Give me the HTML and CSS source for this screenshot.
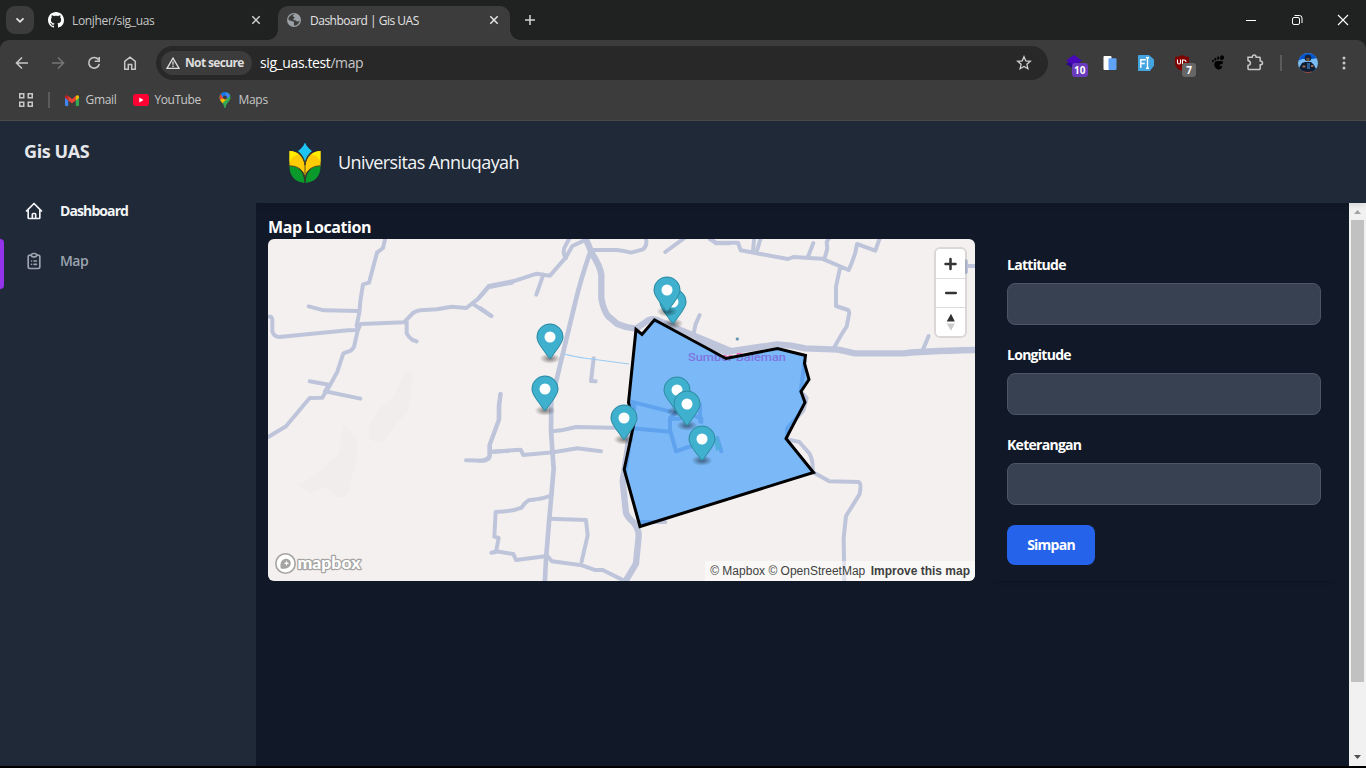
FILE: index.html
```html
<!DOCTYPE html>
<html lang="id">
<head>
<meta charset="utf-8">
<title>Dashboard | Gis UAS</title>
<link rel="stylesheet" href="styles.css">
</head>
<body>
<div class="window">
  <div class="tabstrip">
    <div class="tab-search"><svg width="28" height="28" viewBox="0 0 28 28"><path d="M10.500 12.300l3.500 3.500 3.500-3.500" fill="none" stroke="#e3e3e3" stroke-width="1.800"/></svg></div>
    <div class="tab">
      <svg class="favicon" width="16" height="16" viewBox="0 0 16 16"><path fill="#fff" d="M8 0C3.58 0 0 3.58 0 8c0 3.54 2.29 6.53 5.47 7.59.4.07.55-.17.55-.38 0-.19-.01-.82-.01-1.49-2.01.37-2.53-.49-2.69-.94-.09-.23-.48-.94-.82-1.13-.28-.15-.68-.52-.01-.53.63-.01 1.08.58 1.23.82.72 1.21 1.87.87 2.33.66.07-.52.28-.87.51-1.07-1.78-.2-3.64-.89-3.64-3.95 0-.87.31-1.59.82-2.15-.08-.2-.36-1.02.08-2.12 0 0 .67-.21 2.2.82.64-.18 1.32-.27 2-.27s1.36.09 2 .27c1.53-1.04 2.2-.82 2.2-.82.44 1.1.16 1.92.08 2.12.51.56.82 1.27.82 2.15 0 3.07-1.87 3.75-3.65 3.95.29.25.54.73.54 1.48 0 1.07-.01 1.93-.01 2.2 0 .21.15.46.55.38A8.01 8.01 0 0 0 16 8c0-4.42-3.58-8-8-8z"/></svg>
      <span class="tab-title">Lonjher/sig_uas</span>
      <svg class="close" width="10" height="10" viewBox="0 0 10 10"><path d="M1.300 1.300l7.400 7.400M8.700 1.300L1.300 8.700" stroke="#d0d0d0" stroke-width="1.500"/></svg>
    </div>
    <div class="tab active">
      <svg class="favicon" width="14" height="14" viewBox="0 0 14 14"><circle cx="7" cy="7" r="7" fill="#9aa0a6"/><path d="M7.800 1.200C7 2.200 5.800 1.600 5.800 3c0 1.200 1.700.400 1.800 1.500.100 1-1.200.800-1.300 2 0 1 .900.700 2.100.800 1 .100.800 1.200 2 1.200s1.200-.700 2.300-.800c-.400 2.500-2.500 4.700-5.300 5l-.600-1.400c-.200-1 .800-1.500 0-2.400C5.700 7.800 3.500 8.500 1.200 6.200 1.500 3.600 4.500.700 7.800 1.200z" fill="#3c3c3c"/></svg>
      <span class="tab-title">Dashboard | Gis UAS</span>
      <svg class="close" width="10" height="10" viewBox="0 0 10 10"><path d="M1.300 1.300l7.400 7.400M8.700 1.300L1.300 8.700" stroke="#e6e6e6" stroke-width="1.500"/></svg>
    </div>
    <svg class="new-tab" width="12" height="12" viewBox="0 0 12 12"><path d="M6 1v10M1 6h10" stroke="#d4d4d4" stroke-width="1.500"/></svg>
    <div class="window-buttons">
      <svg width="46" height="40" viewBox="0 0 46 40"><path d="M18 20.500h10" stroke="#fff"/></svg>
      <svg width="46" height="40" viewBox="0 0 46 40"><g fill="none" stroke="#fff"><rect x="18.500" y="17.500" width="7" height="7" rx="1.500"/><path d="M20.500 15.500h5a2.500 2.500 0 0 1 2.500 2.500v5"/></g></svg>
      <svg width="46" height="40" viewBox="0 0 46 40"><path d="M18 15l10 10M28 15L18 25" stroke="#fff" stroke-width="1.100"/></svg>
    </div>
  </div>

  <div class="toolbar-back">
  <div class="toolbar">
    <svg class="slot" viewBox="0 0 36 36"><path d="M24 18H13M18 12.500L12.500 18l5.500 5.500" fill="none" stroke="#c7c7c7" stroke-width="1.600"/></svg>
    <svg class="slot" viewBox="0 0 36 36"><path d="M12 18h11M18 12.500l5.500 5.500-5.500 5.500" fill="none" stroke="#757575" stroke-width="1.600"/></svg>
    <svg class="slot" viewBox="0 0 36 36"><path d="M22.300 14.600A5.300 5.300 0 1 0 23.300 18.800M23.200 12v4.300h-4.500" fill="none" stroke="#c7c7c7" stroke-width="1.600"/></svg>
    <svg class="slot" viewBox="0 0 36 36"><path d="M12.700 24.300v-8L18 12.200l5.300 4.100v8h-3.600v-4.800h-3.400v4.800z" fill="none" stroke="#c7c7c7" stroke-width="1.500"/></svg>
    <div class="omnibox">
      <div class="security">
        <svg width="14" height="12" viewBox="0 0 14 12"><path d="M7 1.100L13 11.300H1z" fill="none" stroke="#dedede" stroke-width="1.300"/><path d="M7 4.500v3.200M7 8.600v1.400" stroke="#dedede" stroke-width="1.300"/></svg>
        <span>Not secure</span>
      </div>
      <span class="url">sig_uas.test<span class="path">/map</span></span>
      <svg class="star" width="16" height="16" viewBox="0 0 16 16"><path d="M8 1.700l1.800 4.200 4.500.400-3.400 3 1 4.400L8 11.400l-3.900 2.300 1-4.400-3.400-3 4.500-.400z" fill="none" stroke="#d0d0d0" stroke-width="1.300"/></svg>
    </div>
    <div class="extensions">
      <svg class="slot" viewBox="0 0 36 36"><path d="M10 19l8-5 8 5-8 5z" fill="#2a0a8a"/><path d="M10 15.500l8-5.500 8 5.500-8 5z" fill="#4807b8"/><rect x="16" y="18" width="16" height="14" rx="3" fill="#6b3bbd"/><text x="23.700" y="29" class="badge">10</text></svg>
      <svg class="slot" viewBox="0 0 36 36"><rect x="11.500" y="11" width="8" height="14" rx="1" fill="#fff"/><rect x="16.500" y="13.300" width="8" height="11.700" rx="1" fill="#5fa2f7"/></svg>
      <svg class="slot" viewBox="0 0 36 36"><path d="M10.500 10H21l5 4.500v6L22 26H10.500q-.500 0-.500-.500v-15z" fill="#44a4e0"/><path d="M12.800 23v-8.300h5M12.800 18.500h4M18 12.500q1.500 0 1.500 1.500v8q0 1.500-1.500 1.500M21 12.500q-1.500 0-1.500 1.500M21 23.500q-1.500 0-1.500-1.500" fill="none" stroke="#fff" stroke-width="1.400"/></svg>
      <svg class="slot" viewBox="0 0 36 36"><path d="M18 10q3 2 7 2v6q0 5-7 8-7-3-7-8v-6q4 0 7-2z" fill="#800000"/><path d="M13.500 14.500v3q0 1.500 1.500 1.500t1.500-1.500v-3M18.500 19v-4h1.500q2 0 2 2" fill="none" stroke="#fff" stroke-width="1.100"/><rect x="18" y="18" width="14" height="14" rx="3" fill="#666"/><text x="25" y="29" class="badge">7</text></svg>
      <svg class="slot" viewBox="0 0 36 36"><ellipse cx="22" cy="12.700" rx="2" ry="2.300" transform="rotate(30 22 12.700)"/><ellipse cx="18.200" cy="13" rx="1.100" ry="1.700"/><ellipse cx="15.400" cy="14.200" rx="1" ry="1.500"/><ellipse cx="13" cy="16" rx=".900" ry="1.300"/><path d="M18.500 16c3 0 5 .300 4.500 2-.500 1.400-3.500 1.200-3.500 2.700 0 1.200 1 .800 1.500.300.700-.600 1.300 0 1 .900-.600 2-2.200 2.900-3.800 2.600-2.500-.500-4-3-3.900-5.300 0-2 1.700-3.200 4.200-3.200z"/></svg>
      <svg class="slot" viewBox="0 0 36 36"><path d="M12 12.200h4.300q0-2.200 1.900-2.200t1.900 2.200h3.400q.700 0 .700.700V16q2.300 0 2.300 1.900t-2.300 1.900v3.900q0 .700-.700.700H12.700q-.700 0-.700-.700v-3.200q2.400-.300 2.400-2.400T12 15.500z" fill="none" stroke="#c7c7c7" stroke-width="1.500"/></svg>
    </div>
    <span class="divider"></span>
    <svg class="slot" viewBox="0 0 36 36"><clipPath id="face"><circle cx="18" cy="18" r="10"/></clipPath><g clip-path="url(#face)"><path d="M8 8h20v20H8z" fill="#79bdf3"/><path d="M8 7h20v6l-6 1H12l-4 2z" fill="#0755cc"/><path d="M9 28v-5l3-5 3-1h6l3 3 2 4v4z" fill="#111d32"/><path d="M17 18h3v6h-3z" fill="#2d5e91"/><circle cx="18" cy="13" r="3.300" fill="#172234"/><path d="M16.500 13h3v3h-3z" fill="#73533d"/><path d="M12.500 20.500h3v2h-3zM21 20h2.500v2H21z" fill="#9a6a52"/><path d="M13 26.500l5 .500 4-.500v3h-9z" fill="#b54b37"/></g></svg>
    <svg class="slot" viewBox="0 0 36 36"><g fill="#c7c7c7"><circle cx="18" cy="13" r="1.500"/><circle cx="18" cy="18" r="1.500"/><circle cx="18" cy="23" r="1.500"/></g></svg>
  </div>
  </div>

  <div class="bookmarks">
    <svg class="apps" width="14" height="14" viewBox="0 0 14 14"><g fill="none" stroke="#c7c7c7" stroke-width="1.500"><rect x=".750" y=".750" width="4" height="4"/><rect x="9.250" y=".750" width="4" height="4"/><rect x=".750" y="9.250" width="4" height="4"/><rect x="9.250" y="9.250" width="4" height="4"/></g></svg>
    <span class="divider"></span>
    <div class="bookmark gmail"><svg width="14" height="11" viewBox="0 0 14 11"><path d="M0 2v8q0 1 1 1h2.200V4.500z" fill="#4285f4"/><path d="M14 2v8q0 1-1 1h-2.200V4.500z" fill="#34a853"/><path d="M3.200 1v4.500L7 8.300l3.800-2.800V1L7 3.900z" fill="#ea4335"/><path d="M0 1.500v1.300l3.200 2.700V1Q1-.700 0 1.500z" fill="#c5221f"/><path d="M14 1.500v1.300l-3.200 2.700V1Q13-.700 14 1.500z" fill="#fbbc04"/></svg><span>Gmail</span></div>
    <div class="bookmark youtube"><svg width="16" height="12" viewBox="0 0 16 12"><rect width="16" height="12" rx="3" fill="#ff0033"/><path d="M6.300 3.500v5l4.200-2.500z" fill="#fff"/></svg><span>YouTube</span></div>
    <div class="bookmark maps"><svg width="12" height="16" viewBox="0 0 12 16"><path d="M6 0a5.500 5.500 0 0 1 5.500 5.600C11.500 9.500 7.500 10 6.500 16h-1C4.500 10 .500 9.500.500 5.600A5.500 5.500 0 0 1 6 0z" fill="#34a853"/><path d="M1.800 2L6 5.600 1.400 8.500Q-.500 5 1.800 2z" fill="#ea4335"/><path d="M1.800 2A5.500 5.500 0 0 1 8 .400L4 6z" fill="#1a73e8"/><path d="M8 .400a5.500 5.500 0 0 1 3.200 3.400L8 7 5.500 4z" fill="#4285f4"/><path d="M1 7.800L5 6l3 1-4.700 4.200z" fill="#fbbc04"/><circle cx="6" cy="5.500" r="1.900" fill="#3c3c3c"/></svg><span>Maps</span></div>
  </div>

  <div class="page">
    <aside class="sidebar">
      <div class="brand"><span>Gis UAS</span></div>
      <nav>
        <a class="nav-item current"><svg width="20" height="20" viewBox="0 0 24 24"><path d="M3 12l2-2m0 0l7-7 7 7M5 10v10a1 1 0 001 1h3m10-11l2 2m-2-2v10a1 1 0 01-1 1h-3m-6 0a1 1 0 001-1v-4a1 1 0 011-1h2a1 1 0 011 1v4a1 1 0 001 1m-6 0h6"/></svg><span>Dashboard</span></a>
        <a class="nav-item marked"><svg width="20" height="20" viewBox="0 0 24 24"><path d="M9 5H7a2 2 0 00-2 2v12a2 2 0 002 2h10a2 2 0 002-2V7a2 2 0 00-2-2h-2M9 5a2 2 0 002 2h2a2 2 0 002-2M9 5a2 2 0 012-2h2a2 2 0 012 2m-3 7h3m-3 4h3m-6-4h.010M9 16h.010"/></svg><span>Map</span></a>
      </nav>
    </aside>
    <div class="content">
      <header class="header">
        <svg width="32" height="42" viewBox="0 0 32 42"><path d="M.500 10Q13 10 16 25v10Q13 26 .500 25z" fill="#ffcb05"/><path d="M31.500 10Q19 10 16 25v10Q19 26 31.500 25z" fill="#ffcb05"/><path d="M.500 10q5.500 0 9 3.500Q2 14.500.500 22zM31.500 10q-5.500 0-9 3.500Q30 14.500 31.500 22z" fill="#ffee00"/><path d="M16 1.500q2 5 7 8.500-5 4.500-7 11-2-6.500-7-11 5-3.500 7-8.500z" fill="#1cc5f4"/><path d="M.500 25q14 0 15 17Q.500 40 .500 25zM31.500 25q-14 0-15 17 15-2 15-17z" fill="#0a9a2c"/><path d="M9.500 11Q15 15 16 24q1-9 6.500-13M16 22v19M.500 24.700Q13.500 25 15.700 36M31.500 24.700Q18.500 25 16.300 36" fill="none" stroke="#4b4520" stroke-width=".900"/></svg>
        <span>Universitas Annuqayah</span>
      </header>
      <div class="body-row">
        <main class="main">
          <section class="map-section">
            <h2><span>Map Location</span></h2>
            <div class="map">
              <svg class="map-canvas" width="707" height="342" viewBox="268 239 707 342">
                <defs>
                  <radialGradient id="shade"><stop offset=".100" stop-opacity=".450"/><stop offset="1" stop-opacity="0"/></radialGradient>
                  <g id="pin"><ellipse cx="0" cy="21.500" rx="10.500" ry="5.250" fill="url(#shade)"/><path d="M13.500 0C13.500 5.570 6.750 13.500 1.250 21c-.730 1-1.770 1-2.500 0C-6.750 13.500-13.500 5.720-13.500 0A13.500 13.500 0 0 1 13.500 0z" fill="#3fb1ce"/><path d="M13 0C13 5.300 6.500 13 .900 20.600q-.900 1.200-1.800 0C-6.500 13-13 5.500-13 0A13 13 0 0 1 13 0z" fill="none" stroke="#000" stroke-opacity=".220"/><circle r="5.500" fill="#fff"/></g>
                </defs>
                <path d="M268 239h707v342H268z" fill="#f4f0ef"/>
                <g class="land" transform="translate(268 238) scale(.33333)">
                  <path d="M410 404h26l-16 112-76 94q-20 12-40-14v-32l34-56 36-24zM227 560l40 40v60l-30 112q-20 14-36 0l-28-26-48 18-34-22 60-38 62-58z"/>
                </g>
                <g class="roads" transform="translate(268 238) scale(.33333)">
                  <path d="M352 0l-7 30-18 14-24 90-18 5-8 50-3 35-8 39 4 10-12 54-8 10-24 9-18 55-23 42-22 36-38 1-71 85-60 36"/>
                  <path d="M122 205l45 12 105 2M-4 236h13q4 4 4 12v32q4 16 20 17l207-20 30-1 8-18 130-5 27-28q10-7 22-8l50-3 44-8 44 4 36-28 30-34 70-14M416 248v38q6 12 18 20l12 4M612 196l58 38M125 430l58 10-12 20 106 22"/>
                  <path d="M698 468l-4 36v40l-28 75v32q0 12-16 17l-56-1M666 642l56-4"/>
                </g>
                <g class="roads" transform="translate(480 238) scale(.33333)">
                  <path d="M-2 178l28-34 80-16 64-21 40 6 47-54 20-35 30-14M258 60q-14-20 0-40l12-22M190 110l-21 60M0 210l34 24"/>
                  <path d="M333 36h78q20 2 42 8l36-10q15-12 8-36M556 42L616-2M690 0l18 16h40M659 231l-12 27-7 32"/>
                  <path d="M61 468l-5 36v42l-28 76v32q-6 14-30 14M28 642l94-7 8 16 90-8 72-12 71 9M216 580l28-3 44-10 140 3M341 361l-8 68 14 1"/>
                  <path d="M215 770q-12 10-70 17-14 10-20 22-30 12-78 13l-4 74 13 4-8 42-14 2 14-4 52 8 8 18 94-12 14 16 90 12 38 14h24l76 38M210 842l108 4 5 46-18 78M480 852h76"/>
                  <path class="street" d="M332 38q-28 80-45 150l-58 240-15 60-1 90 8 115-14 160-9 110-4 80"/>
                  <path class="main-road" d="M316 0l22 50q22 34 26 60v70q6 36 20 54l28 24q28 12 56 14l38-26q18-6 34 4l210 88M460 500l-18 140-14 90 10 95q6 14 24 30 15 20 14 40l-8 82-30 50"/>
                  <path d="M450 490l119 30M455 571l115 10v-40l24-25 70 25v11M570 575l18 65 40-14 23-4M570 542h30M712 600l12 40"/>
                </g>
                <g class="roads" transform="translate(700 238) scale(.33333)">
                  <path d="M30 4l18 10h66l8 23 142 26 16-6 86 5 80 34q8-16 20-52l5-26 55 20 14-40M159 38l4-40M170 42l12-42M325 54l15-39M374 60l8-28-2-20 10-16M420 90l-12 56v58l36 12q6 4 2 18l-6 32q-12 16-38 64M686 294l-16 38M800 84h28M798 70v32"/>
                  <path class="main-road" d="M-4 306l82 36 153-23q44 2 84 12l100 4q36 8 50 11h148q46-6 216-10"/>
                  <path d="M314 370l-12 90 18 20-10 38-48 52v34l36 8 30 34q12 22 10 56l50 28 88 2q10 6 2 38l-40 64-7 66 2 130"/>
                  <path d="M0 500v50"/>
                </g>
                <path d="M564 354q12 3 20 4l45 6" fill="none" stroke="#9acbf4" stroke-width="1.200"/>
                <path d="M714 438l4-1 3 11-5 3z" fill="#a1dfb7"/>
                <text x="688" y="361" class="place" textLength="98" lengthAdjust="spacingAndGlyphs">Sumber Baleman</text>
                <circle cx="737.300" cy="339" r="2" fill="#6798ad" stroke="#fff" stroke-width=".600"/>
                <path d="M636 329.500l6 5 12.500-14.700 71.500 38.700 51.500-10 28 7-1 8 4.500 16-8 12 4 11-19 36 27.500 34-173.500 54-15.800-57 9.500-45-5.200-22z" fill="#0080ff" fill-opacity=".500"/>
                <path d="M636 329.500l6 5 12.500-14.700 71.500 38.700 51.500-10 28 7-1 8 4.500 16-8 12 4 11-19 36 27.500 34-173.500 54-15.800-57 9.500-45-5.200-22z" fill="none" stroke="#000" stroke-width="3"/>
                <use href="#pin" x="673" y="302"/><use href="#pin" x="667" y="290"/><use href="#pin" x="550" y="337"/><use href="#pin" x="545" y="389"/><use href="#pin" x="624" y="418"/><use href="#pin" x="677" y="390"/><use href="#pin" x="687" y="404"/><use href="#pin" x="702" y="439"/>
                <circle cx="285.500" cy="563.500" r="9.700" fill="#fff" stroke="#a5a4a3" stroke-width="1.600"/>
                <path d="M280.800 568.500c-1-4 0-9 4.700-9.700 3.300-.300 5.800 2.200 5.200 5.200-.700 4.500-6.300 5.500-9.900 4.500z" fill="#a5a4a3"/><path d="M286.500 560.500l.700 2 2 .700-2 .700-.700 2-.700-2-2-.700 2-.700z" fill="#fff"/>
                <text x="297.500" y="568.500" class="wordmark" textLength="63" lengthAdjust="spacingAndGlyphs">mapbox</text>
              </svg>
              <div class="map-controls">
                <svg viewBox="0 0 29 29"><path d="M14.500 10v10M9.500 15h10" stroke="#333" stroke-width="2.500" stroke-linecap="round"/></svg>
                <svg viewBox="0 0 29 29"><path d="M10 14.500h10" stroke="#333" stroke-width="2.500" stroke-linecap="round"/></svg>
                <svg viewBox="0 0 29 29"><path d="M10.500 14L15 6l4 8z" fill="#333"/><path d="M10.500 16h8.500l-4 7.500z" fill="#ccc"/></svg>
              </div>
              <div class="attribution"><span>© Mapbox</span> <span>© OpenStreetMap</span> <b>Improve this map</b></div>
            </div>
          </section>
          <form class="form-card">
            <label for="lat"><span>Lattitude</span></label><input id="lat" type="text">
            <label for="lng"><span>Longitude</span></label><input id="lng" type="text">
            <label for="ket"><span>Keterangan</span></label><input id="ket" type="text">
            <button type="button">Simpan</button>
          </form>
        </main>
        <div class="scrollbar">
          <svg width="17" height="17" viewBox="0 0 17 17"><path d="M5 11l3.500-4 3.500 4z" fill="#a3a3a3"/></svg>
          <div class="thumb"></div>
          <svg class="down" width="17" height="17" viewBox="0 0 17 17"><path d="M5 6l3.500 4L12 6z" fill="#505050"/></svg>
        </div>
      </div>
    </div>
  </div>
</div>
</body>
</html>
```

FILE: styles.css
```css
* { box-sizing: border-box; }
body { margin: 0; background: #000; font-family: "Open Sans", "Noto Sans", sans-serif; overflow: hidden; }
svg { display: block; flex: none; }
.window { width: 1366px; height: 768px; display: flex; flex-direction: column; background: #000; }

.tabstrip { height: 40px; flex: none; display: flex; align-items: center; background: #202221; padding-left: 6px; }
.tab-search { width: 28px; height: 28px; border-radius: 9px; background: #3c3c3c; }
.tab { display: flex; align-items: center; width: 228px; height: 34px; margin-top: 6px; padding: 0 0 6px 14px; }
.tab + .tab { margin-left: 16px; }
.tab.active { width: 232px; padding-left: 9px; background: #3c3c3c; border-radius: 10px 10px 0 0; position: relative; }
.tab.active::before, .tab.active::after { content: ""; position: absolute; bottom: 0; width: 10px; height: 10px; }
.tab.active::before { left: -10px; background: radial-gradient(circle at 0 0, transparent 9.5px, #3c3c3c 10px); }
.tab.active::after { right: -10px; background: radial-gradient(circle at 100% 0, transparent 9.5px, #3c3c3c 10px); }
.tab-title { margin-left: 8px; font-size: 12px; color: #c7c7c7; white-space: nowrap; letter-spacing: -0.34px; }
.active .tab-title { color: #e3e3e3; margin-left: 9px; letter-spacing: -0.5px; }
.close { margin-left: auto; margin-right: 11px; }
.tab:not(.active) .close { margin-right: 1px; }
.new-tab { margin-left: 14px; }
.window-buttons { display: flex; margin-left: auto; }

.toolbar-back { flex: none; background: #202221; }
.toolbar { height: 40px; display: flex; align-items: center; padding: 5px 4px 0; background: #3c3c3c; border-radius: 9px 9px 0 0; }
.slot { width: 36px; height: 36px; }
.omnibox { width: 892px; height: 34px; margin: 0 8px; border-radius: 17px; background: #282828; display: flex; align-items: center; padding: 0 16px 0 5px; }
.security { display: flex; align-items: center; width: 91px; height: 24px; padding-left: 5px; border-radius: 12px; background: #3c3c3c; color: #dedede; }
.security span { font-size: 12px; font-weight: 700; margin-left: 5px; letter-spacing: -0.65px; white-space: nowrap; }
.url { margin-left: 8px; font-size: 14px; color: #fff; letter-spacing: -0.4px; }
.path { color: #c7c7c7; }
.star { margin-left: auto; }
.extensions { display: flex; }
.badge { font: bold 10px "Open Sans", sans-serif; fill: #fff; text-anchor: middle; }
.divider { width: 2px; height: 16px; background: #5b5b5b; }
.toolbar .divider { margin: 0 8px; }

.bookmarks { height: 41px; flex: none; display: flex; align-items: center; padding-left: 19px; background: #3c3c3c; border-bottom: 1px solid #4b4b49; }
.bookmarks .divider { margin-left: 15px; width: 1.5px; }
.bookmark { display: flex; align-items: center; gap: 7px; color: #c7c7c7; font-size: 12px; letter-spacing: -0.3px; }
.bookmark span { margin-top: -1px; }
.gmail { margin-left: 15px; width: 68px; }
.youtube { gap: 6px; width: 86px; letter-spacing: -0.45px; }
.maps { gap: 8px; }

.page { height: 645px; display: flex; background: #111827; }
.sidebar { width: 256px; background: #1f2937; flex: none; position: relative; z-index: 1; }
.brand { height: 65px; padding: 16px 24px 0; color: #e5e7eb; font-size: 18px; line-height: 28px; font-weight: 700; letter-spacing: -0.4px; }
.nav-item { height: 50px; display: flex; align-items: center; gap: 16px; padding-left: 24px; color: #9ca3af; font-size: 14px; font-weight: 600; letter-spacing: -0.55px; position: relative; }
.nav-item span { margin-top: -1px; }
.nav-item svg { fill: none; stroke: currentColor; stroke-width: 2; stroke-linecap: round; stroke-linejoin: round; }
.nav-item.current { color: #f3f4f6; font-weight: 700; letter-spacing: -0.9px; }
.marked::before { content: ""; position: absolute; left: 0; top: 3px; width: 4px; height: 50px; background: #9333ea; border-radius: 0 4px 4px 0; }
.content { flex: 1; min-width: 0; display: flex; flex-direction: column; }
.header { height: 82px; display: flex; align-items: center; gap: 17px; padding-left: 33px; background: #1f2937; color: #f3f4f6; font-size: 18px; box-shadow: 0 4px 6px -1px rgba(0, 0, 0, .1); position: relative; letter-spacing: -0.6px; }
.body-row { flex: 1; display: flex; }
.main { flex: 1; display: flex; gap: 16px; padding-left: 12px; align-items: flex-start; }
.map-section { width: 707px; padding-top: 12px; }
h2 { margin: 0; height: 24px; line-height: 25px; font-size: 16px; font-weight: 700; color: #fff; letter-spacing: -0.42px; }
.map { height: 342px; position: relative; border-radius: 6px; overflow: hidden; }
.land { fill: #f1edec; }
.roads { fill: none; stroke: #bec5db; stroke-width: 12; stroke-linecap: round; stroke-linejoin: round; }
.street { stroke-width: 14; }
.main-road { stroke-width: 19; }
.place { font: 500 11px Roboto, sans-serif; fill: #fe68c1; }
.wordmark { font: 900 16.5px Lato, sans-serif; fill: #fff; stroke: #a5a4a3; stroke-width: 2.4px; stroke-linejoin: round; paint-order: stroke; }
.map-controls { position: absolute; top: 10px; right: 10px; width: 29px; border-radius: 4px; background: #fff; box-shadow: 0 0 0 2px rgba(0, 0, 0, .1); }
.map-controls svg { width: 29px; height: 29px; }
.map-controls svg + svg { border-top: 1px solid #ddd; }
.attribution { position: absolute; right: 0; bottom: 0; height: 20px; padding: 0 5px; background: rgba(255, 255, 255, .5); font: 12px/20px "Liberation Sans", sans-serif; color: #404040; white-space: nowrap; }
.attribution b { margin-left: 2px; }

.form-card { width: 346px; height: 358px; margin-top: 20px; padding: 32px 16px 16px; border-radius: 8px; display: flex; flex-direction: column; box-shadow: 0 3px 4px -2px rgba(0, 0, 0, .14); }
label { height: 20px; line-height: 20px; margin-bottom: 8px; font-size: 14px; font-weight: 700; color: #fff; letter-spacing: -0.72px; }
input { height: 42px; margin: 0 0 20px; border: 1px solid #4b5563; border-radius: 8px; background: #374151; }
button { width: 88px; height: 40px; border: 0; padding: 0 0 1px; border-radius: 8px; background: #2563eb; color: #fff; font: 700 14px "Open Sans", sans-serif; letter-spacing: -0.75px; }

.scrollbar { width: 17px; background: #f1f1f1; display: flex; flex-direction: column; align-items: center; }
.thumb { width: 13px; height: 462px; background: #c1c1c1; }
.down { margin-top: auto; }
```
